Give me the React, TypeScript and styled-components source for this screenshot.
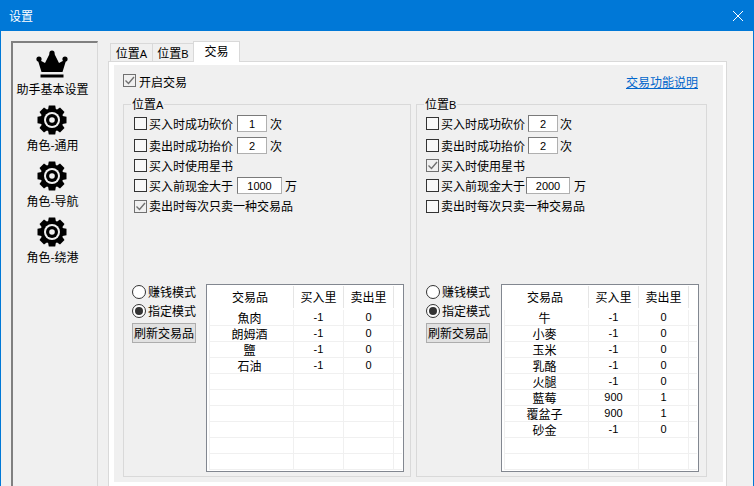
import React from "react";
import styled, { createGlobalStyle } from "styled-components";

const Global = createGlobalStyle`
  html, body { margin: 0; padding: 0; background: #f0f0f0; }
  body { font-family: "Noto Sans CJK SC", "Liberation Sans", sans-serif; font-size: 12px; color: #000; }
  * { box-sizing: border-box; }
`;

const Window = styled.div`
  width: 754px; height: 486px; overflow: hidden; display: flex; flex-direction: column;
  background: #f0f0f0; border-left: 1px solid #0078d7; border-right: 1px solid #0078d7;
`;
const TitleBar = styled.div`
  height: 31px; flex: none; background: #0078d7; color: #fff; display: flex; align-items: center;
  justify-content: space-between; padding: 0 10px 0 8px; line-height: 16px;
`;
const Body = styled.div`
  flex: 1; min-height: 0; display: flex; padding: 10px 0 0 10px;
`;
const Sidebar = styled.nav`
  width: 87px; flex: none; margin-right: 10px; padding: 4px 5px 0 0; height: 470px;
  border: 2px solid #d8d8d8; border-top-color: #808080; border-left-color: #808080; border-right-width: 1px;
  display: flex; flex-direction: column;
`;
const SideItem = styled.div`
  height: 56px; display: flex; flex-direction: column; align-items: center; flex: none;
`;
const SideIcon = styled.div`height: 34px; margin-right: 1px; display: flex; align-items: center; justify-content: center;`;
const SideLabel = styled.div`height: 16px; line-height: 16px; white-space: nowrap;`;

const Main = styled.div`width: 619px; flex: none; display: flex; flex-direction: column; min-height: 0;`;
const TabStrip = styled.div`display: flex; height: 21px; padding-left: 2px; align-items: flex-end; position: relative; z-index: 1; flex: none;`;
const Tab = styled.div<{ $active?: boolean; $w: number }>`
  width: ${(p) => p.$w}px; height: ${(p) => (p.$active ? 21 : 19)}px; text-align: center; line-height: 18px;
  background: ${(p) => (p.$active ? "#fff" : "#f0f0f0")};
  border: 1px solid #d9d9d9; border-bottom: ${(p) => (p.$active ? "none" : "1px solid #d9d9d9")};
  border-right: ${(p) => (p.$active ? "1px solid #d9d9d9" : "none")};
`;
const Page = styled.div`
  flex: none; height: 425px; margin-top: -1px; border: 1px solid #d9d9d9; border-bottom: none;
  background: #fff; padding: 3px 3px 4px 5px; display: flex;
`;
const PageInner = styled.div`
  flex: 1; background: #f0f0f0; padding: 9px 16px 5px 9px; display: flex; flex-direction: column;
`;
const TopRow = styled.div`
  height: 22px; flex: none; display: flex; justify-content: space-between; padding-right: 9px;
`;
const EnableLabel = styled.div`display: flex; align-items: flex-start; gap: 3px; line-height: 16px;`;
const HelpLink = styled.a`color: #0066cc; text-decoration: underline; line-height: 14px; height: 16px; margin-top: 1px;`;
const Groups = styled.div`flex: 1; min-height: 0; display: flex; gap: 5px;`;
const Group = styled.fieldset<{ $w: number; $left: number; $right: number }>`
  width: ${(p) => p.$w}px; flex: none; margin: 0; min-width: 0; border: 1px solid #d9d9d9;
  padding: 0 ${(p) => p.$right}px 4px ${(p) => p.$left}px; display: flex; flex-direction: column;
`;
const GroupTitle = styled.legend<{ $shift: number }>`
  padding: 0 1px; margin-left: ${(p) => p.$shift}px; line-height: 16px; height: 16px;
`;
const Latin = styled.span`font-family: "Liberation Sans", sans-serif; font-size: 11px;`;
const Options = styled.div<{ $inset: number }>`
  display: grid; grid-template-rows: 23px 21px 19px 21px 20px; margin-left: ${(p) => p.$inset}px;
`;
const OptionRow = styled.div`display: flex; align-items: center; line-height: 16px; white-space: nowrap;`;
const OptionText = styled.span`margin-left: 2px;`;
const Box = styled.span<{ $checked?: boolean }>`
  width: 13px; height: 13px; flex: none; display: flex; align-items: center; justify-content: center;
  background: ${(p) => (p.$checked ? "#f0f0f0" : "#f8f8f8")}; border: 1px solid ${(p) => (p.$checked ? "#707070" : "#333")};
`;
const TextField = styled.span<{ $w: number; $gap: number }>`
  width: ${(p) => p.$w}px; height: 17px; margin-left: ${(p) => p.$gap}px; background: #fff; border: 1px solid #7a7a7a;
  border-color: #7a7a7a #b0b0b0 #b0b0b0 #7a7a7a;
  font-family: "Liberation Sans", sans-serif; font-size: 11px; display: flex; align-items: center; justify-content: center;
`;
const Unit = styled.span<{ $gap: number }>`margin-left: ${(p) => p.$gap}px;`;
const Lower = styled.div`margin-top: auto; display: flex; justify-content: space-between;`;
const ModeColumn = styled.div`width: 64px; margin-top: -2px; display: flex; flex-direction: column;`;
const RadioRow = styled.div`height: 19px; display: flex; align-items: center; gap: 2px; line-height: 16px; white-space: nowrap;`;
const Radio = styled.span<{ $checked?: boolean }>`
  width: 14px; height: 14px; flex: none; border-radius: 50%; border: 1px solid #333; background: #fff;
  display: flex; align-items: center; justify-content: center;
  &::after { content: ""; width: 8px; height: 8px; border-radius: 50%; background: ${(p) => (p.$checked ? "#333" : "transparent")}; }
`;
const RefreshButton = styled.button`
  width: 64px; height: 20px; margin-top: 3px; padding: 0; background: #e1e1e1; border: 1px solid #adadad;
  font: inherit; color: #000; line-height: 16px; white-space: nowrap;
`;
const Table = styled.div`
  width: 198px; height: 188px; flex: none; border: 1px solid #828790; background: #fff; padding-top: 1px;
`;
const HeaderRow = styled.div`display: grid; grid-template-columns: 87px 50px 50px; height: 24px; padding-bottom: 2px;`;
const HeaderCell = styled.div`
  display: flex; align-items: center; justify-content: center; border-right: 1px solid #e5e5e5; line-height: 16px;
`;
const Rows = styled.div`margin: 0 1px 0 2px; border-left: 1px solid #f0f0f0;`;
const Row = styled.div`
  display: grid; grid-template-columns: 84px 50px 50px 1fr; height: 16px; border-bottom: 1px solid #f0f0f0;
`;
const Cell = styled.div`
  display: flex; align-items: center; justify-content: center; border-right: 1px solid #f0f0f0; line-height: 15px; white-space: nowrap;
`;
const NameCell = styled(Cell)`padding-right: 4px;`;
const NumCell = styled(Cell)`font-family: "Liberation Sans", sans-serif; font-size: 11px;`;
const EmptyCell = styled.div``;

const Check = () => (
  <svg width="11" height="11" viewBox="0 0 11 11"><path d="M1.5 5.5 L4.5 8.5 L10 2" fill="none" stroke="#707070" strokeWidth="1.4" /></svg>
);
const CheckBox = ({ checked }: { checked?: boolean }) => <Box $checked={checked}>{checked && <Check />}</Box>;

const Crown = () => (
  <svg width="32" height="32" viewBox="0 0 32 32">
    <circle cx="16" cy="5" r="2.6" /><circle cx="3" cy="11" r="2.6" /><circle cx="29" cy="11" r="2.6" />
    <path d="M1.5 11 L9 15 L14 5 L18 5 L23 15 L30.5 11 L26.5 24 L5.5 24 Z" />
    <rect x="4.5" y="26.5" width="23" height="3" />
  </svg>
);
const gearTeeth = [0, 45, 90, 135, 180, 225, 270, 315];
const Gear = () => (
  <svg width="32" height="32" viewBox="0 0 32 32">
    {gearTeeth.map((a) => (
      <path key={a} d="M12.8 1.5 H19.2 L20.2 7 H11.8 Z" transform={`rotate(${a} 16 16)`} />
    ))}
    <circle cx="16" cy="16" r="11.5" />
    <circle cx="16" cy="16" r="8" fill="#f0f0f0" />
    <circle cx="16" cy="16" r="6" />
    <circle cx="16" cy="16" r="2.8" fill="#f0f0f0" />
  </svg>
);

type Item = [string, string, string];
type Option = { text: string; checked?: boolean; value?: string; w?: number; gap?: number; unit?: string; unitGap?: number };

const OptionLine = ({ o }: { o: Option }) => (
  <OptionRow>
    <CheckBox checked={o.checked} />
    <OptionText>{o.text}</OptionText>
    {o.value && <TextField $w={o.w ?? 30} $gap={o.gap ?? 3}>{o.value}</TextField>}
    {o.unit && <Unit $gap={o.unitGap ?? 2}>{o.unit}</Unit>}
  </OptionRow>
);

const TradePanel = ({ title, w, left, right, inset, shift, options, items }: {
  title: string; w: number; left: number; right: number; inset: number; shift: number; options: Option[]; items: Item[];
}) => {
  const rows: (Item | null)[] = [...items, ...Array(10 - items.length).fill(null)];
  return (
    <Group $w={w} $left={left} $right={right}>
      <GroupTitle $shift={shift}>位置<Latin>{title}</Latin></GroupTitle>
      <Options $inset={inset}>
        {options.map((o) => <OptionLine key={o.text} o={o} />)}
      </Options>
      <Lower>
        <ModeColumn>
          <RadioRow><Radio />赚钱模式</RadioRow>
          <RadioRow><Radio $checked />指定模式</RadioRow>
          <RefreshButton>刷新交易品</RefreshButton>
        </ModeColumn>
        <Table>
          <HeaderRow>
            <HeaderCell>交易品</HeaderCell>
            <HeaderCell>买入里</HeaderCell>
            <HeaderCell>卖出里</HeaderCell>
          </HeaderRow>
          <Rows>
            {rows.map((r, i) => (
              <Row key={i}>
                <NameCell>{r?.[0]}</NameCell>
                <NumCell>{r?.[1]}</NumCell>
                <NumCell>{r?.[2]}</NumCell>
                <EmptyCell />
              </Row>
            ))}
          </Rows>
        </Table>
      </Lower>
    </Group>
  );
};

const optionsA: Option[] = [
  { text: "买入时成功砍价", value: "1", gap: 4, w: 30, unit: "次", unitGap: 3 },
  { text: "卖出时成功抬价", value: "2", gap: 4, w: 30, unit: "次", unitGap: 3 },
  { text: "买入时使用星书" },
  { text: "买入前现金大于", value: "1000", gap: 4, w: 45, unit: "万", unitGap: 3 },
  { text: "卖出时每次只卖一种交易品", checked: true },
];
const optionsB: Option[] = [
  { text: "买入时成功砍价", value: "2", gap: 3, w: 30, unit: "次", unitGap: 2 },
  { text: "卖出时成功抬价", value: "2", gap: 3, w: 30, unit: "次", unitGap: 2 },
  { text: "买入时使用星书", checked: true },
  { text: "买入前现金大于", value: "2000", gap: 1, w: 44, unit: "万", unitGap: 4 },
  { text: "卖出时每次只卖一种交易品" },
];
const itemsA: Item[] = [["魚肉", "-1", "0"], ["朗姆酒", "-1", "0"], ["鹽", "-1", "0"], ["石油", "-1", "0"]];
const itemsB: Item[] = [
  ["牛", "-1", "0"], ["小麥", "-1", "0"], ["玉米", "-1", "0"], ["乳酪", "-1", "0"], ["火腿", "-1", "0"],
  ["藍莓", "900", "1"], ["覆盆子", "900", "1"], ["砂金", "-1", "0"],
];

export default function App() {
  return (
    <Window>
      <Global />
      <TitleBar>
        <span>设置</span>
        <svg width="10" height="10" viewBox="0 0 10 10"><path d="M0 0 L10 10 M10 0 L0 10" stroke="#fff" strokeWidth="1" /></svg>
      </TitleBar>
      <Body>
        <Sidebar>
          <SideItem><SideIcon><Crown /></SideIcon><SideLabel>助手基本设置</SideLabel></SideItem>
          <SideItem><SideIcon><Gear /></SideIcon><SideLabel>角色-通用</SideLabel></SideItem>
          <SideItem><SideIcon><Gear /></SideIcon><SideLabel>角色-导航</SideLabel></SideItem>
          <SideItem><SideIcon><Gear /></SideIcon><SideLabel>角色-绕港</SideLabel></SideItem>
        </Sidebar>
        <Main>
          <TabStrip>
            <Tab $w={42}>位置<Latin>A</Latin></Tab>
            <Tab $w={41}>位置<Latin>B</Latin></Tab>
            <Tab $w={47} $active>交易</Tab>
          </TabStrip>
          <Page>
            <PageInner>
              <TopRow>
                <EnableLabel><CheckBox checked />开启交易</EnableLabel>
                <HelpLink href="#">交易功能说明</HelpLink>
              </TopRow>
              <Groups>
                <TradePanel title="A" w={288} left={8} right={6} inset={2} shift={-1} options={optionsA} items={itemsA} />
                <TradePanel title="B" w={291} left={9} right={7} inset={0} shift={-2} options={optionsB} items={itemsB} />
              </Groups>
            </PageInner>
          </Page>
        </Main>
      </Body>
    </Window>
  );
}
